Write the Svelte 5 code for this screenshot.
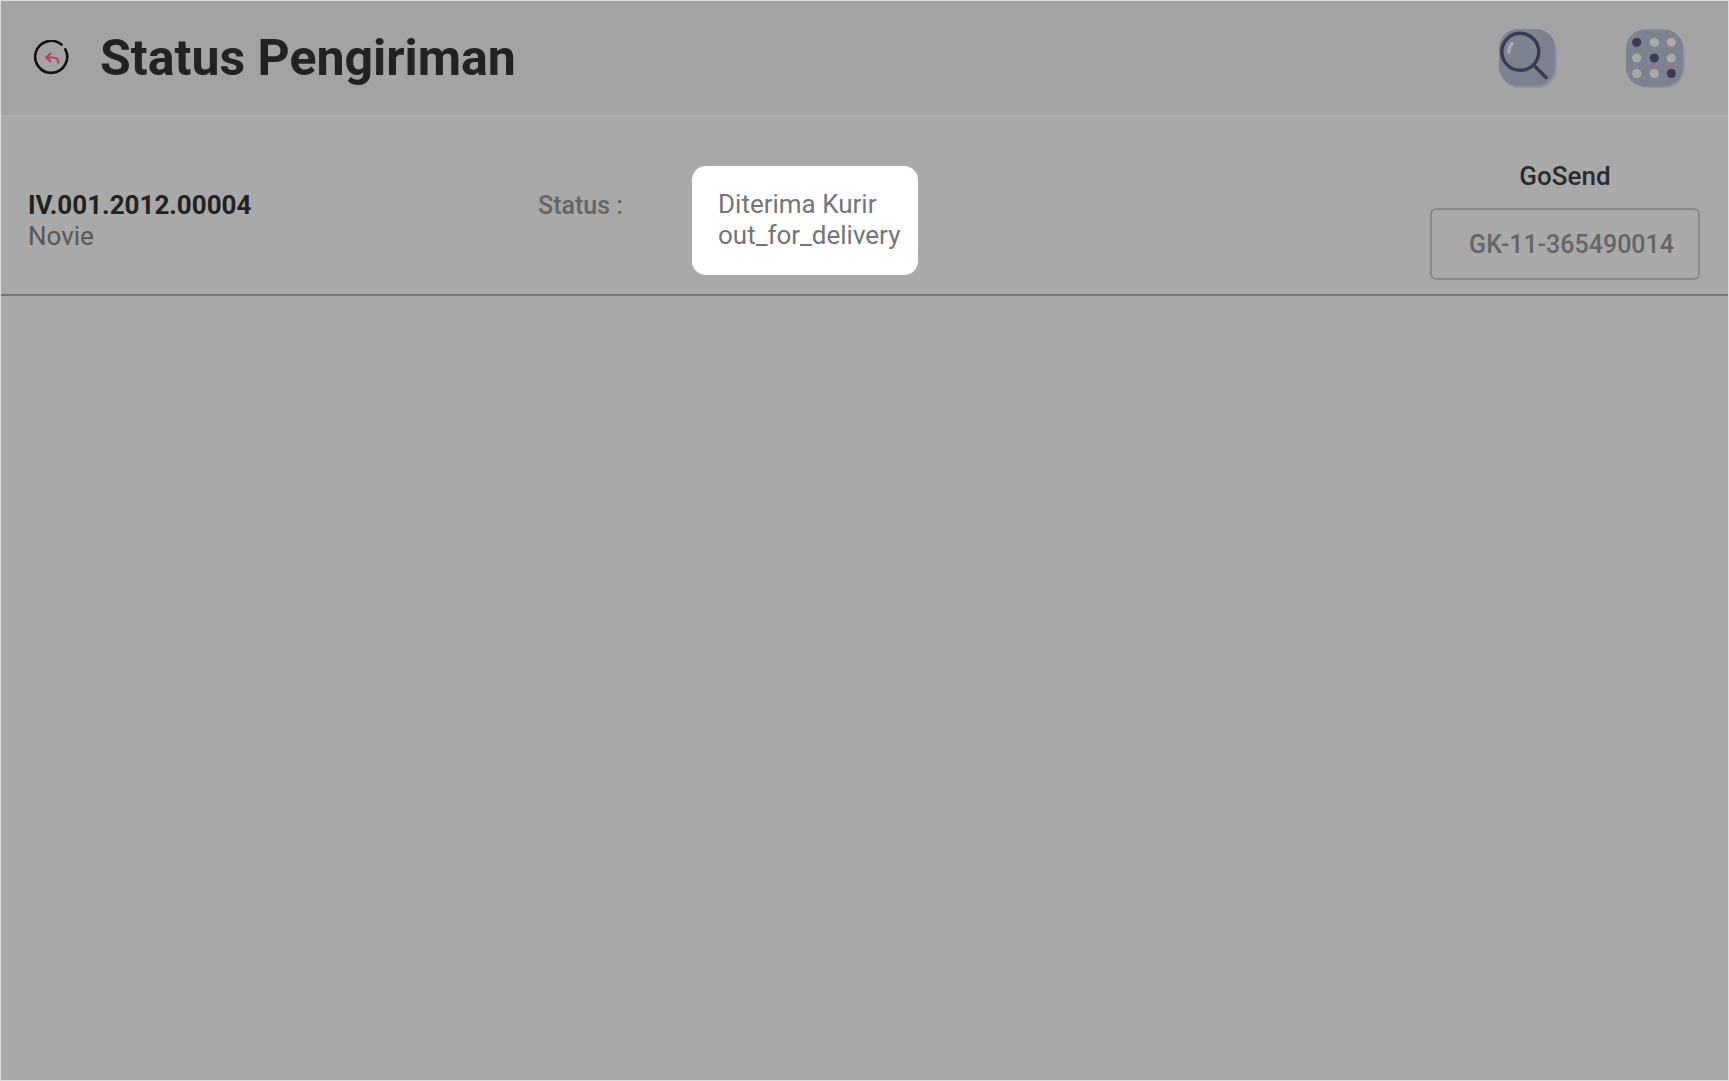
<script>
  let title = 'Status Pengiriman';

  let shipments = [
    {
      invoice: 'IV.001.2012.00004',
      customer: 'Novie',
      status: 'Diterima Kurir',
      code: 'out_for_delivery',
      courier: 'GoSend',
      tracking: 'GK-11-365490014'
    }
  ];
</script>

<div class="page">
  <header>
    <button class="back" aria-label="Kembali">
      <svg width="36" height="36" viewBox="0 0 36 36" fill="none" stroke-linecap="round">
        <path d="M31.300 9.300 A16 16 0 1 1 27.500 4.600" stroke="#111" stroke-width="2.600" />
        <path d="M16.500 13.500 L12.300 17.500 L16.500 21.500 M13 17.500 H18.500 Q24.300 17.500 24.300 22.800" stroke="#b04350" stroke-width="2" />
      </svg>
    </button>
    <h1>{title}</h1>
    <div class="actions">
      <button aria-label="Cari">
        <svg width="60" height="60" viewBox="0 0 60 60" fill="none" stroke-linecap="round">
          <rect x="2" y="3" width="57" height="57" rx="20" fill="#9494a0" />
          <rect x="1" y="1" width="56" height="57" rx="19" fill="#7c828f" />
          <circle cx="22.300" cy="23.800" r="18.500" stroke="#3d3954" stroke-width="3.400" />
          <path d="M36 37.500 L48 49.500" stroke="#3d3954" stroke-width="3.600" />
          <path d="M11 24 Q11 18 14.500 15.500" stroke="#a9abb0" stroke-width="3.400" />
        </svg>
      </button>
      <button aria-label="Menu">
        <svg width="60" height="60" viewBox="0 0 60 60">
          <rect x="2" y="4" width="57" height="56" rx="20" fill="#9494a0" />
          <rect x="0" y="1.500" width="57" height="57" rx="19" fill="#7c828f" />
          {#each [14.3, 30, 45.5] as cy, row}
            {#each [10.7, 28.3, 45.3] as cx, col}
              <circle {cx} {cy} r="4.600" fill={row === col ? '#3d3954' : '#a9a9a9'} />
            {/each}
          {/each}
        </svg>
      </button>
    </div>
  </header>

  <main>
    {#each shipments as item}
      <section class="row">
        <div>
          <div class="invoice">{item.invoice}</div>
          <div class="customer">{item.customer}</div>
        </div>
        <div class="label">Status :</div>
        <div class="status">
          {item.status}<br>{item.code}
        </div>
        <div class="courier">
          <label for={item.invoice}>{item.courier}</label>
          <input id={item.invoice} type="text" value={item.tracking} readonly>
        </div>
      </section>
    {/each}
  </main>
</div>

<style>
  :global(body) {
    background-color: #a9a9a9;
  }

  .page {
    min-height: 100vh;
    box-sizing: border-box;
    border: 1px solid #dcdcdc;
    background-color: #a9a9a9;
    font-family: Roboto, "Liberation Sans", sans-serif;
    font-size: 26px;
    line-height: 31px;
    color: #5a5a5a;
  }

  header {
    display: flex;
    align-items: center;
    height: 114px;
    padding: 0 42px 0 33px;
    background-color: #a3a3a3;
  }

  button {
    display: block;
    padding: 0;
    border: 0;
    background: none;
    cursor: pointer;
  }

  svg {
    display: block;
  }

  h1 {
    margin: 0 0 0 30px;
    font-size: 50px;
    line-height: 60px;
    font-weight: 700;
    color: #222;
  }

  .actions {
    display: flex;
    gap: 68px;
    margin-left: auto;
  }

  .row {
    display: grid;
    grid-template-columns: 510px 154px auto 1fr;
    align-items: center;
    padding: 46px 28px 14px 27px;
    border-bottom: 2px solid #777;
  }

  .invoice {
    font-weight: 700;
    color: #222;
  }

  .customer {
    color: #585858;
  }

  /* sits on the first of the two text lines beside it */
  .label {
    padding-bottom: 31px;
    font-size: 25px;
    font-weight: 500;
    color: #656565;
  }

  .status {
    padding: 23px 18px 24px 26px;
    border-radius: 14px;
    background-color: #fff;
    color: #757575;
  }

  .courier {
    justify-self: end;
    width: 270px;
  }

  label {
    display: block;
    margin-bottom: 16px;
    text-align: center;
    font-weight: 500;
    color: #2b2b2b;
  }

  input {
    display: block;
    box-sizing: border-box;
    width: 100%;
    height: 72px;
    padding: 0 24px;
    border: 2px solid #8b8b8b;
    border-radius: 6px;
    background: none;
    font: inherit;
    font-size: 25px;
    font-weight: 500;
    text-align: right;
    color: #656565;
  }
</style>
